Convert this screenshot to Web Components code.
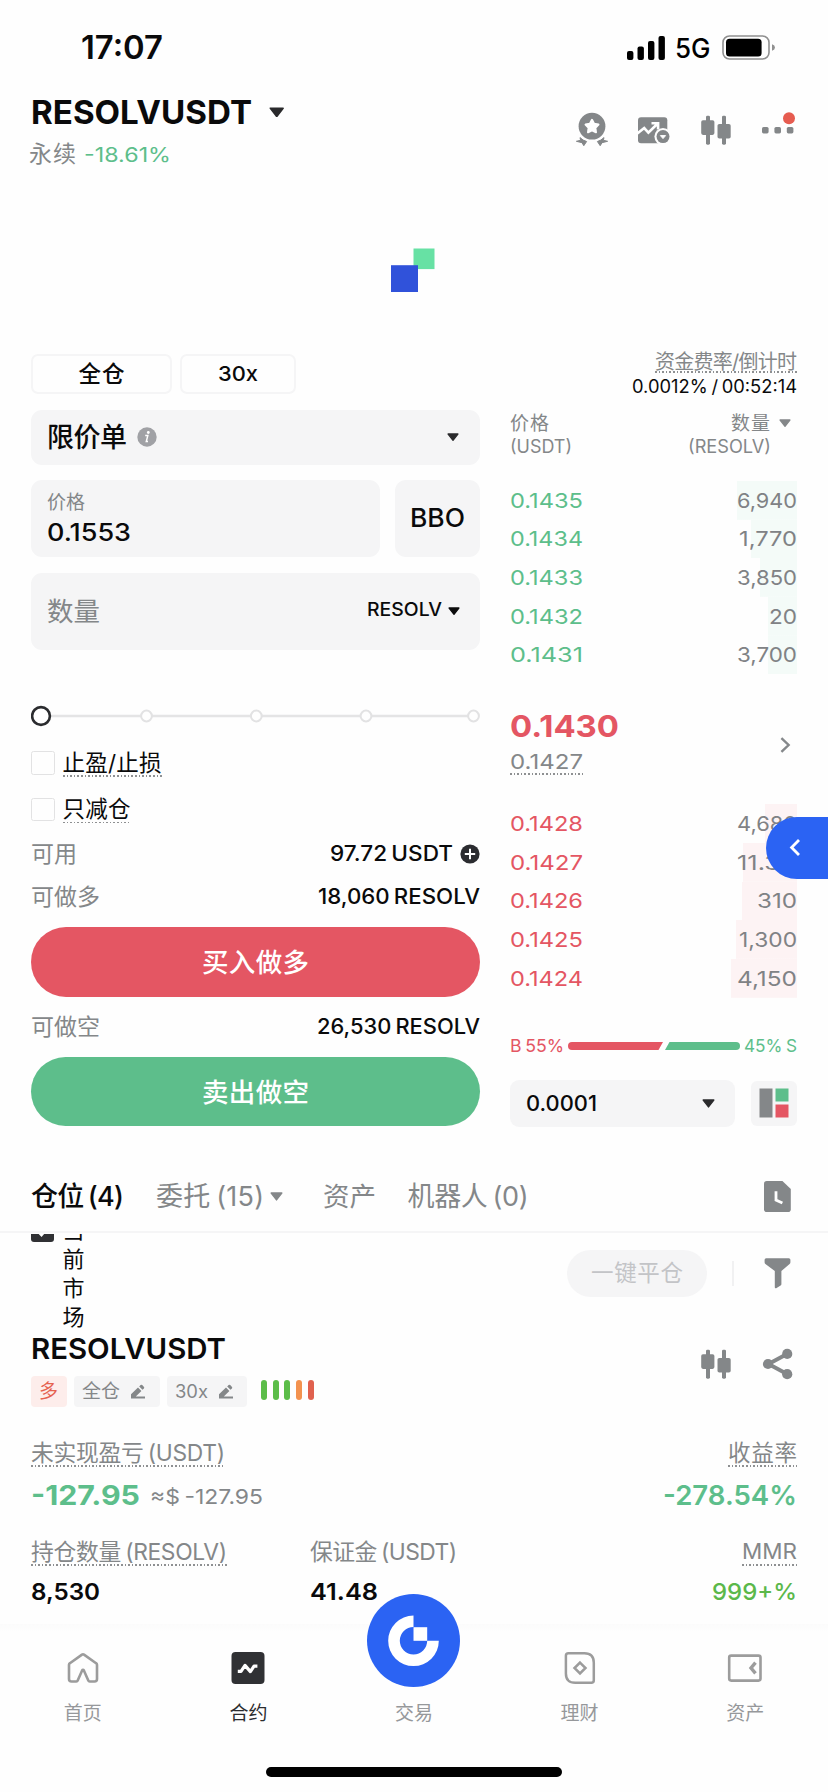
<!DOCTYPE html>
<html lang="zh-CN">
<head>
<meta charset="utf-8">
<title>RESOLVUSDT 永续</title>
<style>
html,body{margin:0;padding:0;background:#fefefe}
body{font-family:Inter,"Noto Sans CJK SC",sans-serif;color:#0a0a0b;width:828px;height:1792px;overflow:hidden}
</style>
</head>
<body>
<trade-app></trade-app>
<script>
const GRAY='#848789', GREEN='#5dbe8b', RED='#e45663';

class Base extends HTMLElement{
  connectedCallback(){
    if(this.shadowRoot) return;
    const t=document.createElement('template');
    t.innerHTML='<style>:host{display:block;box-sizing:border-box}*{box-sizing:border-box}.row{display:flex;align-items:center}.between{justify-content:space-between}.g{color:#848789}'+(this.css||'')+'</style>'+this.html();
    this.attachShadow({mode:'open'}).append(t.content.cloneNode(true));
  }
  html(){return '<slot></slot>'}
  a(n,d){return this.getAttribute(n)??d}
}

/* One line of text that occupies the width given in "w": Latin text and digits
   are widened, text with Han characters is tracked. */
class FitLabel extends HTMLElement{
  connectedCallback(){
    if(this.shadowRoot) return;
    const s=this.getAttribute('s')||20, wt=this.getAttribute('wt')||400, c=this.getAttribute('c'), dot=this.getAttribute('dot');
    this.attachShadow({mode:'open'}).innerHTML=`<style>
      :host{display:inline-block;flex:none;position:relative;white-space:nowrap;line-height:1;font-size:${s}px;font-weight:${wt};word-spacing:-.08em;${c?'color:'+c:''}}
      span{display:inline-block;transform-origin:0 50%}
      ${dot?`:host::after{content:"";position:absolute;left:0;right:0;top:calc(50% + ${dot}px);height:1.6px;background:repeating-linear-gradient(90deg,#8e9092 0 1.6px,transparent 1.6px 3.6px)}`:''}
    </style><span><slot></slot></span>`;
    const w=parseFloat(this.getAttribute('w'));
    if(w){
      const span=this.shadowRoot.querySelector('span'), n=[...this.textContent].length, nat=span.getBoundingClientRect().width;
      if(/[\u4e00-\u9fff]/.test(this.textContent)){
        const ls=(w-nat)/Math.max(1,n-1);
        this.style.letterSpacing=ls+'px';
        span.style.marginRight=-ls+'px';
      }else{
        span.style.transform=`scaleX(${w/nat})`;
        span.style.marginRight=(w-nat)+'px';
      }
    }
  }
}
customElements.define('fit-label',FitLabel);

const candles=`<svg width="40" height="40" viewBox="0 0 40 40" fill="${GRAY}"><rect x="10" y="5.7" width="4" height="29" rx="1.4"/><rect x="5.2" y="10.3" width="13.2" height="14.6" rx="1.8"/><rect x="26" y="5.7" width="4" height="29" rx="1.4"/><rect x="21.5" y="14" width="13.2" height="14.6" rx="1.8"/></svg>`;
const ICONS={
  candles,
  medal:`<svg width="40" height="40" viewBox="0 0 40 40" fill="${GRAY}"><circle cx="20" cy="16.2" r="13.4"/><path fill="#fff" stroke="#fff" stroke-width="2" stroke-linejoin="round" d="M20 9.8l2.1 4 4.4.8-3.1 3.2.6 4.500-4-2-4 2 .6-4.500-3.100-3.200 4.400-.8z"/><path stroke="${GRAY}" stroke-linejoin="round" d="M8 27.6q3 3 6.600 3.900l-2.800 4.200-1.800-3-5.600-1.400 4.200-1z"/><path stroke="${GRAY}" stroke-linejoin="round" d="M32 27.6q-3 3-6.600 3.900l2.800 4.200 1.800-3 5.600-1.400-4.200-1z"/></svg>`,
  chart:`<svg width="40" height="40" viewBox="0 0 40 40" fill="${GRAY}"><rect x="4" y="7.2" width="29.3" height="26" rx="3"/><path d="M3 23.8L10.2 18l4.2 4.6L23.2 14M17.500 13.200h6.600v6.200" fill="none" stroke="#fff" stroke-width="2.6"/><circle cx="29" cy="26.6" r="8.6" fill="#fefefe"/><circle cx="29" cy="26.6" r="6.500"/><path fill="#fff" stroke="#fff" stroke-linejoin="round" d="M26.400 25.600h5.200L29 28.600z"/></svg>`,
  dots:`<svg width="40" height="40" viewBox="0 0 40 40" fill="${GRAY}"><rect x="4" y="17" width="6.6" height="6.4" rx="1.6"/><rect x="16.400" y="17" width="6.6" height="6.4" rx="1.6"/><rect x="28.800" y="17" width="6.6" height="6.4" rx="1.6"/><circle cx="31" cy="8.2" r="6" fill="#e65c50"/></svg>`,
  share:`<svg width="40" height="40" viewBox="0 0 40 40" fill="${GRAY}"><path d="M29.500 9.700L10.500 20l19 10.300" fill="none" stroke="${GRAY}" stroke-width="4"/><circle cx="29.200" cy="9.900" r="5.100"/><circle cx="10" cy="20" r="5.100"/><circle cx="29.200" cy="30.200" r="5.100"/></svg>`,
  funnel:`<svg width="27" height="32" viewBox="0 0 27 32"><path fill="${GRAY}" d="M2.2 1.2h22.6q1.6 0 1.6 1.6v2.4q0 1-.8 1.7L17.4 14v13q0 1-.8 1.500l-4.400 2.700q-1.400.6-1.400-1V14L1.400 6.900Q.6 6.200.6 5.200V2.800q0-1.600 1.600-1.600z"/></svg>`,
  history:`<svg width="27" height="31" viewBox="0 0 27 31"><path fill="${GRAY}" d="M2.8 0H18.4l8.4 8v20.2q0 2.8-2.8 2.8H2.8Q0 31 0 28.2V2.8Q0 0 2.8 0z"/><path d="M12 10.3v8.7l6.4 3" fill="none" stroke="#fff" stroke-width="2.8"/></svg>`,
  pen:`<svg width="16" height="16" viewBox="0 0 16 16" fill="${GRAY}"><path d="M1 10.2L8 3.500l3.400 3.400-5.600 5.500H15v2.200H1zM9.200 2.400l1.400-1.500q.8-.6 1.600.2l1.800 1.800q.6.8-.1 1.500L12.500 5.800z"/></svg>`,
  chev:`<svg width="11" height="16" viewBox="0 0 11 16"><path d="M1.400 1.200l7.200 6.800-7.200 6.800" fill="none" stroke="#85888b" stroke-width="2.400"/></svg>`,
  home:`<svg width="40" height="40" viewBox="0 0 40 40"><path d="M6 16.800q0-1 .9-1.600L19 6.600q1-.7 2 0l12.100 8.600q.9.600.9 1.600V31q0 2.500-2.500 2.500h-4.800q-1 0-1.400-1L20.900 22.500q-.9-1.600-1.800 0L14.700 32.500q-.4 1-1.400 1H8.500Q6 33.500 6 31z" fill="none" stroke="#9c9c9c" stroke-width="2.600"/></svg>`,
  futures:`<svg width="40" height="40" viewBox="0 0 40 40"><rect x="3.500" y="4" width="33" height="32" rx="4" fill="#303134"/><path d="M9.800 23.400h3.200l4-6 5.400 6.200 3.600-5.400h3.400" fill="none" stroke="#fff" stroke-width="3.200" stroke-linejoin="round"/></svg>`,
  earn:`<svg width="40" height="40" viewBox="0 0 40 40" fill="none" stroke="#9c9c9c" stroke-width="2.500"><path d="M7.400 5.300h16q9.400 0 9.400 9.400v17.600q0 2.500-2.500 2.500h-16q-9.400 0-9.400-9.400V7.800q0-2.500 2.500-2.500z" transform="translate(1 0)"/><path d="M20 14.600l5.500 5.400-5.500 5.400-5.500-5.400z"/></svg>`,
  wallet:`<svg width="40" height="40" viewBox="0 0 40 40" fill="none" stroke="#9c9c9c" stroke-width="2.600"><rect x="4.200" y="7.600" width="31.300" height="25" rx="2"/><path stroke-width="3.400" d="M30.500 14.600L26 20l4.500 5.400"/></svg>`
};
customElements.define('ui-icon',class extends Base{
  css=':host{flex:none;line-height:0}svg{display:block}';
  html(){return ICONS[this.a('name')]}
});
customElements.define('ui-caret',class extends Base{
  css=':host{flex:none}svg{display:block}';
  html(){const w=+this.a('w',11),h=w*.7,c=this.a('c','#2a2a2c');return `<svg width="${w}" height="${h}" viewBox="0 0 11 7.700"><path d="M1 .9h9L5.500 6.700z" fill="${c}" stroke="${c}" stroke-width="1.200" stroke-linejoin="round"/></svg>`}
});

customElements.define('status-bar',class extends Base{
  css=':host{display:flex;align-items:center;justify-content:space-between;height:95px;padding:0 53px 0 81px}.r{display:flex;align-items:center}svg{display:block}fit-label{margin:1px 12px 0 10px}';
  html(){return `<fit-label s="32.500" wt="600" w="82" style="margin:1px 0 0">17:07</fit-label><div class="r">
   <svg width="38" height="24" viewBox="0 0 38 24"><rect y="15" width="6.400" height="9" rx="2"/><rect x="10.500" y="10.500" width="6.400" height="13.500" rx="2"/><rect x="21" y="5" width="6.400" height="19" rx="2"/><rect x="31.500" width="6.400" height="24" rx="2"/></svg>
   <fit-label s="26.500" wt="500" w="35.500" c="#000">5G</fit-label>
   <svg width="53" height="25" viewBox="0 0 53 25"><rect x="1" y="1" width="46" height="23" rx="6.500" fill="none" stroke="#909090" stroke-width="1.600"/><rect x="4" y="3.800" width="35.600" height="17.600" rx="3.500"/><path d="M50 9.200q3 1 3 3.300t-3 3.300z" fill="#909090"/></svg></div>`}
});

customElements.define('pair-header',class extends Base{
  css=':host{display:flex;justify-content:space-between;height:90px;padding:0 30px 0 31px}.t{height:34px;gap:16.500px}.s{height:26px;margin:12.500px 0 0 -2px;gap:8px}.i{display:flex;gap:22px;margin-top:15px}';
  html(){return `<div><div class="row t"><fit-label s="33" wt="700" w="221">RESOLVUSDT</fit-label><ui-caret w="15.500"></ui-caret></div>
  <div class="row s"><fit-label s="23" w="47" c="${GRAY}">永续</fit-label><fit-label s="20" w="87" c="${GREEN}">-18.61%</fit-label></div></div>
  <div class="i"><ui-icon name="medal"></ui-icon><ui-icon name="chart"></ui-icon><ui-icon name="candles"></ui-icon><ui-icon name="dots"></ui-icon></div>`}
});
customElements.define('brand-loader',class extends Base{
  css=':host{height:165px;padding:63px 2px 0 0;display:flex;justify-content:center;align-items:flex-start}';
  html(){return `<svg width="44" height="44" viewBox="0 0 44 44"><path fill="#67e1a4" d="M22.500 .5h21v20.600h-21z"/><path fill="#3052da" d="M0 17.200h27v26.800H0z"/></svg>`}
});

customElements.define('info-row',class extends Base{
  css=':host{display:flex;align-items:center;justify-content:space-between;height:30px}.v{display:flex;align-items:center;gap:7px}svg{display:block}';
  html(){return `<fit-label s="23" w="${this.a('lw')}" c="${GRAY}">${this.a('label')}</fit-label><div class="v"><fit-label s="21.200" wt="500" w="${this.a('vw')}">${this.a('value')}</fit-label>${this.hasAttribute('plus')?'<svg width="20" height="20" viewBox="0 0 20 20"><circle cx="10" cy="10" r="9.600" fill="#2b2c30"/><path d="M10 4.800v10.400M4.800 10h10.400" stroke="#fff" stroke-width="2"/></svg>':''}</div>`}
});
customElements.define('check-row',class extends Base{
  css=':host{display:flex;align-items:center;gap:8px;height:30px}i{width:23.500px;height:23.500px;border:1.600px solid #e2e2e3;border-radius:2.500px}';
  html(){return `<i></i><fit-label s="22.500" w="${this.a('w')}" dot="12">${this.a('label')}</fit-label>`}
});
customElements.define('big-button',class extends Base{
  css=':host{display:flex;align-items:center;justify-content:center;height:69.500px;border-radius:35px;color:#fff;padding-top:1px}';
  html(){this.style.background=this.a('c');return `<fit-label s="26.500" wt="500" w="107">${this.a('label')}</fit-label>`}
});
customElements.define('percent-slider',class extends Base{
  css=':host{height:24px}svg{display:block}';
  html(){return `<svg width="449" height="24" viewBox="0 0 449 24"><path d="M10 12h428" stroke="#e4e4e5" stroke-width="2.400"/><g fill="#fefefe" stroke="#e2e2e3" stroke-width="2"><circle cx="115.500" cy="12" r="5.400"/><circle cx="225.300" cy="12" r="5.400"/><circle cx="335" cy="12" r="5.400"/><circle cx="442.500" cy="12" r="5.400"/></g><circle cx="10" cy="12" r="8.900" fill="#fff" stroke="#2b2c2f" stroke-width="2.600"/></svg>`}
});

customElements.define('order-form',class extends Base{
  css=`:host{width:449px;padding-top:4px}
  .tabs{display:flex;gap:8px}.tab{height:39.500px;border:2px solid #f5f5f6;border-radius:7px;display:flex;align-items:center;justify-content:center}
  .box{background:#f5f5f6;border-radius:11px;padding:0 21px 0 16px}
  .type{height:54.500px;margin-top:16.500px}.type div{gap:10px}
  .pr{display:flex;gap:15px;margin-top:15.500px;height:77px}.price{width:349px;padding-top:12px;display:flex;flex-direction:column}
  .price .l{height:20px;display:flex;align-items:center}.price .v{height:26px;margin-top:7.500px;display:flex;align-items:center}
  .bbo{flex:1;padding:0;display:flex;align-items:center;justify-content:center}
  .amt{height:77.500px;margin-top:15.500px;padding-right:20px}.u{gap:6px;margin-top:-4px}.u ui-caret{margin-top:4px}svg{display:block}`;
  html(){return `<div class="tabs"><div class="tab" style="width:141px"><fit-label s="22.500" wt="500" w="46">全仓</fit-label></div><div class="tab" style="width:116px"><fit-label s="20.500" wt="500" w="40">30x</fit-label></div></div>
  <div class="box type row between"><div class="row"><fit-label s="27" wt="500" w="80">限价单</fit-label><svg width="20" height="20" viewBox="0 0 20 20"><circle cx="10" cy="10" r="9.700" fill="#a0a1a5"/><circle cx="11.300" cy="5.500" r="1.400" fill="#fff"/><path d="M8.200 8.600h2.600l-1.500 5.800h1.700" fill="none" stroke="#fff" stroke-width="1.500"/></svg></div><ui-caret w="12"></ui-caret></div>
  <div class="pr"><div class="box price"><div class="l"><fit-label s="19" w="38" c="${GRAY}">价格</fit-label></div><div class="v"><fit-label s="24" wt="500" w="84">0.1553</fit-label></div></div><div class="box bbo"><fit-label s="25" wt="500" w="55">BBO</fit-label></div></div>
  <div class="box amt row between"><fit-label s="26.500" w="53" c="${GRAY}">数量</fit-label><div class="row u"><fit-label s="18.500" wt="500" w="75">RESOLV</fit-label><ui-caret w="12" c="#0c0c0d"></ui-caret></div></div>
  <percent-slider style="margin-top:54px"></percent-slider>
  <check-row style="margin-top:20px" w="99" label="止盈/止损"></check-row>
  <check-row style="margin-top:16.500px" w="68" label="只减仓"></check-row>
  <info-row style="margin-top:14.500px" label="可用" lw="46" value="97.72 USDT" vw="123" plus></info-row>
  <info-row style="margin-top:13px" label="可做多" lw="69" value="18,060 RESOLV" vw="162"></info-row>
  <big-button style="margin-top:15px" c="${RED}" label="买入做多"></big-button>
  <info-row style="margin-top:15.500px" label="可做空" lw="69" value="26,530 RESOLV" vw="163"></info-row>
  <big-button style="margin-top:14.500px" c="${GREEN}" label="卖出做空"></big-button>`}
});

customElements.define('book-row',class extends Base{
  css=':host{display:flex;align-items:center;justify-content:space-between;height:38.700px;padding:1px 0 0}';
  html(){const up=this.a('side')==='g',d=this.a('d');this.style.background=`linear-gradient(${up?'#f4fbf8,#f4fbf8':'#fdf3f4,#fdf3f4'}) right/${d}px 100% no-repeat`;
  return `<fit-label s="20.300" w="73" c="${up?GREEN:RED}">${this.a('p')}</fit-label><fit-label s="20.300" w="${this.a('w')}" c="#808285">${this.a('q')}</fit-label>`}
});
customElements.define('order-book',class extends Base{
  css=`:host{width:287px;padding-top:2px;display:flex;flex-direction:column}
  .e{display:flex;align-items:center;justify-content:flex-end;height:20px}
  .h1{height:22px;margin-top:15.500px;padding-right:6px}.h1 .q{gap:9px}.h2{height:22px;margin-top:1.500px;padding-right:26px}
  .mid{display:flex;align-items:center;justify-content:space-between;margin-top:33.500px;height:66px;padding-right:6px}.mid .a{height:36px;display:flex;align-items:center}.mid .b{height:24px;margin-top:6px;display:flex;align-items:center}.mid ui-icon{margin-top:9px}
  .ratio{display:flex;align-items:center;justify-content:space-between;height:20px;margin-top:38.150px}
  .tick{display:flex;justify-content:space-between;margin-top:24px}.sel{width:225px;height:47px;background:#f5f5f6;border-radius:9px;padding:0 20px 0 16px}.lay{width:46.500px;height:45px;margin-top:1px;background:#f5f5f6;border-radius:6px;display:flex;align-items:center;justify-content:center}svg{display:block}`;
  html(){const rows=(side,list)=>list.map(([p,q,w,d])=>`<book-row side="${side}" p="${p}" q="${q}" w="${w}" d="${d}"></book-row>`).join('');
  return `<div class="e"><fit-label s="20" w="142" c="${GRAY}" dot="9">资金费率/倒计时</fit-label></div>
  <div class="e" style="margin-top:4.500px"><fit-label s="18" w="165">0.0012% / 00:52:14</fit-label></div>
  <div class="row between h1"><fit-label s="19" w="39" c="${GRAY}">价格</fit-label><div class="row q"><fit-label s="19" w="39" c="${GRAY}">数量</fit-label><ui-caret w="12" c="${GRAY}"></ui-caret></div></div>
  <div class="row between h2"><fit-label s="18" w="62" c="${GRAY}">(USDT)</fit-label><fit-label s="18" w="83" c="${GRAY}">(RESOLV)</fit-label></div>
  <div style="margin-top:23.500px">${rows('g',[['0.1435','6,940',60,60],['0.1434','1,770',58,46],['0.1433','3,850',60,37],['0.1432','20',28,29],['0.1431','3,700',60,29]])}</div>
  <div class="mid"><div><div class="a"><fit-label s="30.500" wt="700" w="109" c="${RED}">0.1430</fit-label></div><div class="b"><fit-label s="20.300" w="73" c="${GRAY}" dot="11">0.1427</fit-label></div></div><ui-icon name="chev"></ui-icon></div>
  <div style="margin-top:30.350px">${rows('r',[['0.1428','4,680',60,32],['0.1427','11.3K',60,54],['0.1426','310',40,55],['0.1425','1,300',58,61],['0.1424','4,150',60,66]])}</div>
  <div class="ratio"><fit-label s="17.500" w="54" c="${RED}">B 55%</fit-label><svg width="172" height="8" viewBox="0 0 172 8"><path d="M4 0h91l-4.500 8H4a4 4 0 010-8z" fill="${RED}"/><path d="M101.500 0H168a4 4 0 010 8H97z" fill="${GREEN}"/></svg><fit-label s="17.500" w="53" c="${GREEN}">45% S</fit-label></div>
  <div class="tick"><div class="sel row between"><fit-label s="21" wt="500" w="71">0.0001</fit-label><ui-caret w="13"></ui-caret></div><div class="lay"><svg width="30" height="30" viewBox="0 0 30 30"><path fill="${GRAY}" d="M.5.500h13v29H.5z"/><path fill="${GREEN}" d="M16.500.500h13v13h-13z"/><path fill="${RED}" d="M16.500 16.500h13v13h-13z"/></svg></div></div>`}
});

customElements.define('trade-panel',class extends Base{
  css=':host{display:flex;justify-content:space-between;height:812px;padding:0 31px}';
  html(){return '<order-form></order-form><order-book></order-book>'}
});
customElements.define('float-tab',class extends Base{
  css=':host{position:absolute;right:0;top:816.500px;width:62px;height:62px;background:#2b63f3;border-radius:31px 0 0 31px;display:flex;align-items:center;padding-left:23px}svg{display:block}';
  html(){return '<svg width="12" height="19" viewBox="0 0 12 19"><path d="M10 2L2.600 9.500 10 17" fill="none" stroke="#fff" stroke-width="2.800"/></svg>'}
});

customElements.define('section-tabs',class extends Base{
  css=':host{display:flex;align-items:center;height:70.500px;border-bottom:2.500px solid #f5f5f6;padding:0 37px 0 31px}.o{gap:6px}.o ui-caret{margin-top:1px}ui-icon{margin-left:auto}';
  html(){return `<fit-label s="27" wt="500" w="93">仓位 (4)</fit-label><div class="row o" style="margin-left:32px"><fit-label s="27" w="108" c="${GRAY}">委托 (15)</fit-label><ui-caret w="13" c="${GRAY}"></ui-caret></div><fit-label style="margin-left:40px" s="26.500" w="53" c="${GRAY}">资产</fit-label><fit-label style="margin-left:31.500px" s="27" w="121" c="${GRAY}">机器人 (0)</fit-label><ui-icon name="history"></ui-icon>`}
});
customElements.define('position-toolbar',class extends Base{
  css=`:host{display:flex;height:98px;margin-top:1.500px;overflow:hidden;padding:0 37px 0 31px}
  .c{width:23px;height:23px;margin-top:-15px;background:#303134;border-radius:3px}.c svg{display:block}
  .v{width:23px;margin:-18px 0 0 8.500px;display:flex;flex-direction:column}.v fit-label{height:29px;line-height:29px}
  .r{display:flex;align-items:center;margin:16px 0 0 auto;height:46.500px}.p{width:140px;height:46.500px;border-radius:24px;background:#f5f5f6;display:flex;align-items:center;justify-content:center}.l{width:2px;height:25px;background:#f1f1f2;margin:0 30px 0 25px}`;
  html(){return `<div class="c"><svg width="23" height="23" viewBox="0 0 23 23"><path d="M5.500 11l5 5 8-9" fill="none" stroke="#fff" stroke-width="2.600"/></svg></div><div class="v">${[...'当前市场'].map(x=>`<fit-label s="22">${x}</fit-label>`).join('')}</div><div class="r"><div class="p"><fit-label s="22.500" w="92" c="#c3c4c7">一键平仓</fit-label></div><div class="l"></div><ui-icon name="funnel"></ui-icon></div>`}
});
customElements.define('tag-chip',class extends Base{
  css=':host{display:flex;align-items:center;gap:10px;height:31px;background:#f5f5f6;border-radius:4px;padding-left:8px}';
  html(){return '<slot></slot>'}
});
customElements.define('position-card',class extends Base{
  css=`:host{padding:2px 31px 0}.head{display:flex;justify-content:space-between}.head .i{display:flex;gap:22px;margin:10px -1px 0 0}.t{height:28px;display:flex;align-items:center}.tags{display:flex;align-items:center;margin-top:14px;gap:7px}.bars{display:flex;gap:5.700px;margin:-4px 0 0 7px}.bars i{width:6px;height:20px;border-radius:3px}
  .g3{display:grid;grid-template-columns:279px 1fr auto;align-items:center;justify-items:start}.g3>:last-child{justify-self:end}.v1{gap:10px}`;
  html(){return `<div class="head"><div><div class="t"><fit-label s="29" wt="600" w="195">RESOLVUSDT</fit-label></div><div class="tags">
  <tag-chip style="width:36px;background:#fdedeb"><fit-label s="19" c="#e5614f">多</fit-label></tag-chip><tag-chip style="width:86px"><fit-label s="19" w="38" c="${GRAY}">全仓</fit-label><ui-icon name="pen"></ui-icon></tag-chip><tag-chip style="width:80px"><fit-label s="18" w="33" c="${GRAY}">30x</fit-label><ui-icon name="pen"></ui-icon></tag-chip>
  <div class="bars">${['#5bbd49','#5bbd49','#5bbd49','#f3924f','#e0614e'].map(c=>`<i style="background:${c}"></i>`).join('')}</div></div></div><div class="i"><ui-icon name="candles"></ui-icon><ui-icon name="share"></ui-icon></div></div>
  <div class="g3" style="margin-top:33px;height:26px"><fit-label s="22.800" w="194" c="${GRAY}" dot="12">未实现盈亏 (USDT)</fit-label><span></span><fit-label s="22.500" w="69" c="${GRAY}" dot="12">收益率</fit-label></div>
  <div class="g3" style="margin-top:14.500px;height:30px"><div class="row v1"><fit-label s="27.500" wt="700" w="109" c="${GREEN}">-127.95</fit-label><fit-label s="20.500" w="113" c="${GRAY}" style="margin-top:3px">≈$ -127.95</fit-label></div><span></span><fit-label s="27.500" wt="600" w="134" c="${GREEN}">-278.54%</fit-label></div>
  <div class="g3" style="margin-top:28.500px;height:26px"><fit-label s="22.800" w="196" c="${GRAY}" dot="12">持仓数量 (RESOLV)</fit-label><fit-label s="22.800" w="147" c="${GRAY}">保证金 (USDT)</fit-label><fit-label s="21.500" w="55" c="${GRAY}" dot="12">MMR</fit-label></div>
  <div class="g3" style="margin-top:14px;height:26px"><fit-label s="23.500" wt="600" w="69">8,530</fit-label><fit-label s="23.500" wt="600" w="68">41.48</fit-label><fit-label s="23.500" wt="500" w="85" c="#5bb84a">999+%</fit-label></div>`}
});
customElements.define('nav-item',class extends Base{
  css=':host{flex:1;display:flex;flex-direction:column;align-items:center}fit-label{margin-top:16px;color:var(--c,#96989b)}.o{margin-top:-54px;height:93px}.o+fit-label{margin-top:17px}svg{display:block}';
  html(){return (this.a('icon')?`<ui-icon name="${this.a('icon')}"></ui-icon>`:`<div class="o"><svg width="93" height="93" viewBox="0 0 93 93"><circle cx="46.500" cy="46.500" r="46.500" fill="#2b63f3"/><path fill="#fff" d="M46.500 21.500a25.300 25.300 0 1 0 25.300 25.300H60.200a13.700 13.700 0 1 1-13.700-13.700z"/><path fill="#fff" d="M46.500 33.200h13.700v13.600H46.500z"/></svg></div>`)+`<fit-label s="19" w="38">${this.a('label')}</fit-label>`}
});
customElements.define('bottom-nav',class extends Base{
  css=':host{position:relative;height:168px;background:linear-gradient(#fbfbfb,#fefefe 8px)}nav{display:flex;height:142.500px;padding-top:24px}.bar{width:296px;height:10px;border-radius:5px;background:#000;margin:0 auto}';
  html(){return `<nav><nav-item icon="home" label="首页"></nav-item><nav-item icon="futures" label="合约" style="--c:#2b2c2f"></nav-item><nav-item label="交易"></nav-item><nav-item icon="earn" label="理财"></nav-item><nav-item icon="wallet" label="资产"></nav-item></nav><div class="bar"></div>`}
});
customElements.define('trade-app',class extends Base{
  css=':host{position:relative;width:828px;height:1792px;overflow:hidden;display:flex;flex-direction:column}position-card{flex:1}';
  html(){return '<status-bar></status-bar><pair-header></pair-header><brand-loader></brand-loader><trade-panel></trade-panel><section-tabs></section-tabs><position-toolbar></position-toolbar><position-card></position-card><bottom-nav></bottom-nav><float-tab></float-tab>'}
});
</script>
</body>
</html>
